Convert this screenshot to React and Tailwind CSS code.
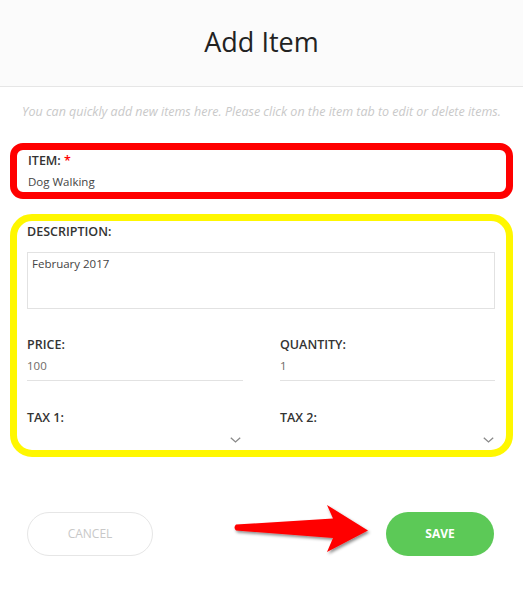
import React from "react";

function Chevron() {
  return (
    <svg width="11" height="6" viewBox="0 0 11 6" className="block">
      <path d="M0.8 0.8 L5.5 5 L10.2 0.8" fill="none" stroke="#8a8a8a" strokeWidth="1.3" />
    </svg>
  );
}

export default function App() {
  return (
    <div className="w-[523px] h-[590px] bg-white overflow-hidden" style={{ fontFamily: '"Open Sans", "Liberation Sans", sans-serif' }}>
      <div className="h-[87px] bg-[#fbfbfb] border-b border-[#e6e6e6] flex items-center justify-center">
        <h1 className="text-[27px] leading-none text-[#222] font-normal mt-[-3px]">Add Item</h1>
      </div>
      <p className="text-center italic text-[12.5px] leading-[16px] text-[#c9c9c9] mt-[17px]">
        You can quickly add new items here. Please click on the item tab to edit or delete items.
      </p>

      <div className="mx-[10px] mt-[23px] h-[56px] border-[7px] border-[#ff0000] rounded-[13px] pl-[11px] pt-[3px]">
        <div className="text-[12.5px] leading-[16px] font-semibold text-[#333]">
          ITEM: <span className="text-[#ff0000]">*</span>
        </div>
        <div className="text-[11.5px] leading-[16px] text-[#444] mt-[5px]">Dog Walking</div>
      </div>

      <div className="mx-[10px] mt-[15px] h-[243px] border-[7px] border-[#fff700] rounded-[22px] pl-[10px] pr-[11px] pt-[3px]">
        <div className="text-[12.5px] leading-[16px] font-semibold text-[#333]">DESCRIPTION:</div>
        <div className="mt-[12px] h-[57px] border border-[#e2e2e2] pl-[4px] pt-[3px] text-[11.5px] leading-[16px] text-[#444]">
          February 2017
        </div>
        <div className="grid grid-cols-[216px_215px] gap-x-[37px] mt-[28px]">
          <div>
            <div className="text-[12.5px] leading-[16px] font-semibold text-[#333]">PRICE:</div>
            <div className="mt-[5px] pb-[6px] border-b border-[#e2e2e2] text-[11.5px] leading-[16px] text-[#6f6a66]">100</div>
          </div>
          <div>
            <div className="text-[12.5px] leading-[16px] font-semibold text-[#333]">QUANTITY:</div>
            <div className="mt-[5px] pb-[6px] border-b border-[#e2e2e2] text-[11.5px] leading-[16px] text-[#6f6a66]">1</div>
          </div>
          <div className="mt-[29px]">
            <div className="text-[12.5px] leading-[16px] font-semibold text-[#333]">TAX 1:</div>
            <div className="flex justify-end pr-[2px] mt-[11px]">
              <Chevron />
            </div>
          </div>
          <div className="mt-[29px]">
            <div className="text-[12.5px] leading-[16px] font-semibold text-[#333]">TAX 2:</div>
            <div className="flex justify-end pr-[1px] mt-[11px]">
              <Chevron />
            </div>
          </div>
        </div>
      </div>

      <div className="relative mt-[55px] pl-[27px] pr-[29px] flex justify-between">
        <button className="w-[126px] h-[44px] rounded-full border border-[#e6e6e6] bg-white text-[12px] text-[#c8c8c8] font-normal">
          CANCEL
        </button>
        <button className="w-[108px] h-[44px] rounded-full bg-[#5cc957] text-[12px] text-white font-bold">
          SAVE
        </button>
        <svg className="absolute left-[226px] top-[-12px]" width="150" height="60" viewBox="226 500 150 60">
          <defs>
            <filter id="sh" x="-20%" y="-30%" width="140%" height="160%">
              <feDropShadow dx="1.5" dy="2" stdDeviation="1.5" floodColor="#000" floodOpacity="0.45" />
            </filter>
          </defs>
          <path
            d="M236 524.5 L333 518.5 L327 505 L368 530.5 L327 552 L333 538 L236 530.5 Q233 527.5 236 524.5 Z"
            fill="#ff0000"
            filter="url(#sh)"
          />
        </svg>
      </div>
    </div>
  );
}
